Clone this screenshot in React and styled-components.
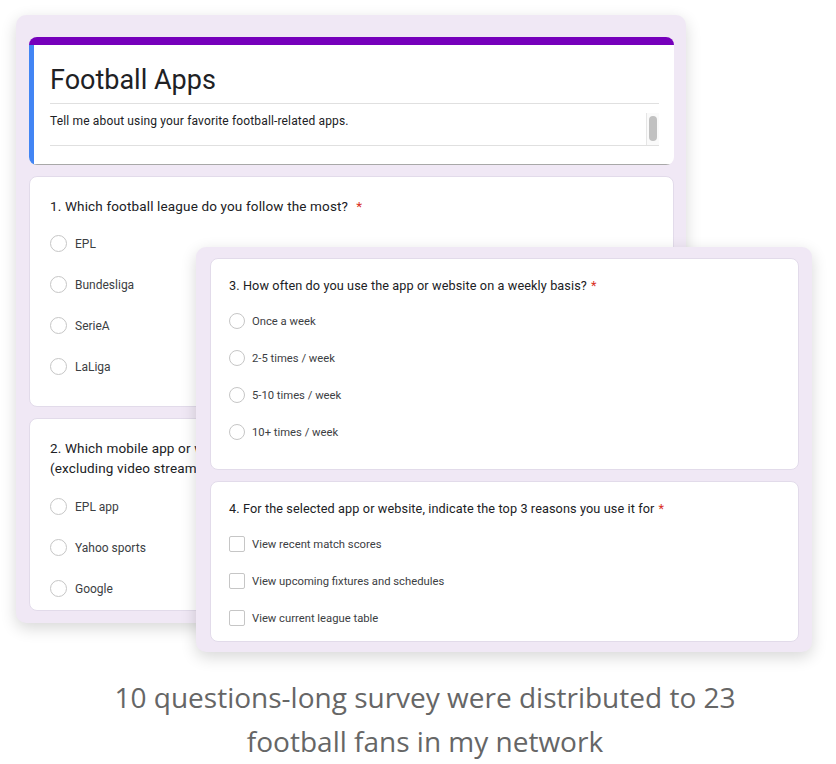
import React from "react";
import styled, { createGlobalStyle } from "styled-components";

const GlobalStyle = createGlobalStyle`
  body {
    margin: 0;
    background: #fff;
    font-family: Roboto, "Liberation Sans", sans-serif;
    color: #202124;
  }
`;

const Page = styled.div`
  width: 836px;
  height: 764px;
  overflow: hidden;
`;

const Stage = styled.div`
  position: relative;
  height: 675px;
  padding: 15px 0 0 16px;
  box-sizing: border-box;
`;

const Panel = styled.div`
  background: #f0e8f5;
  border-radius: 10px;
  box-shadow: 0 5px 16px rgba(0, 0, 0, 0.16);
  display: flex;
  flex-direction: column;
  gap: 11px;
  box-sizing: border-box;
  overflow: hidden;
`;

const BackPanel = styled(Panel)`
  width: 670px;
  height: 608px;
  padding: 22px 12px 12px 13px;
`;

const FrontPanel = styled(Panel)`
  position: absolute;
  left: 196px;
  top: 247px;
  width: 616px;
  height: 405px;
  padding: 11px 13px 10px 14px;
`;

const Card = styled.div`
  background: #fff;
  border: 1px solid #e2dbea;
  border-radius: 8px;
  padding: ${(p) => (p.$small ? "18px 18px 0" : "19px 20px 0")};
  flex: ${(p) => (p.$fill ? "1" : "none")};
  height: ${(p) => (p.$h ? `${p.$h}px` : "auto")};
  min-height: 0;
  overflow: hidden;
  box-sizing: border-box;
`;

const HeaderCard = styled.div`
  background: #fff;
  border-radius: 8px;
  border-top: 8px solid #7600bb;
  overflow: hidden;
  flex: none;
`;

const HeaderBody = styled.div`
  border-left: 5px solid #4285f4;
  border-bottom: 1px solid #a8a8a8;
  padding: 19px 15px 18px 16px;
`;

const Title = styled.h1`
  margin: 0;
  font-family: Roboto, "Liberation Sans", sans-serif;
  font-weight: 400;
  font-size: 27px;
  line-height: 32px;
  color: #202124;
  padding-bottom: 7px;
  border-bottom: 1px solid #e0e0e0;
`;

const DescBox = styled.div`
  display: flex;
  height: 41px;
  border-bottom: 1px solid #e0e0e0;
`;

const Desc = styled.p`
  flex: 1;
  margin: 0;
  padding-top: 10px;
  font-size: 12px;
  letter-spacing: 0.15px;
  line-height: 14px;
  color: #202124;
`;

const ScrollTrack = styled.div`
  width: 13px;
  margin-top: 9px;
  background: #fafafa;
  border-left: 1px solid #e6e6e6;
  display: flex;
  justify-content: center;
  padding-top: 3px;
  box-sizing: border-box;
`;

const ScrollThumb = styled.div`
  width: 8px;
  height: 25px;
  border-radius: 4px;
  background: #c1c1c1;
`;

const Question = styled.div`
  font-family: Roboto, "Liberation Sans", sans-serif;
  font-size: ${(p) => (p.$small ? "12.7px" : "13.5px")};
  letter-spacing: ${(p) => (p.$small ? "0.1px" : "0.15px")};
  line-height: ${(p) => (p.$small ? "18px" : "20px")};
  color: #202124;
`;

const Req = styled.span`
  color: #d93025;
  margin-left: ${(p) => (p.$wide ? "8px" : "4px")};
`;

const OptionList = styled.div`
  margin-top: ${(p) => (p.$small ? "7.5px" : p.$gap ? `${p.$gap}px` : "7px")};
  display: flex;
  flex-direction: column;
`;

const Option = styled.div`
  display: flex;
  align-items: center;
  height: ${(p) => (p.$small ? "37px" : "41px")};
  gap: ${(p) => (p.$small ? "7px" : "8px")};
  font-size: ${(p) => (p.$small ? "11.25px" : "12px")};
  color: #3c4043;
`;

const Radio = styled.span`
  width: ${(p) => (p.$small ? "16px" : "17px")};
  height: ${(p) => (p.$small ? "16px" : "17px")};
  border-radius: 50%;
  border: 1.5px solid #c6c6c6;
  box-sizing: border-box;
  flex: none;
`;

const Check = styled.span`
  width: 16px;
  height: 16px;
  border-radius: 2px;
  border: 1.5px solid #c6c6c6;
  box-sizing: border-box;
  flex: none;
`;

const Caption = styled.p`
  margin: 0;
  padding-left: 14px;
  text-align: center;
  font-family: "Open Sans", "Liberation Sans", sans-serif;
  font-weight: 400;
  font-size: 28px;
  line-height: 44px;
  color: #666;
`;

function Choices({ items, small, check, gap }) {
  return (
    <OptionList $small={small} $gap={gap}>
      {items.map((label) => (
        <Option key={label} $small={small}>
          {check ? <Check /> : <Radio $small={small} />}
          {label}
        </Option>
      ))}
    </OptionList>
  );
}

export default function App() {
  return (
    <Page>
      <GlobalStyle />
      <Stage>
        <BackPanel>
          <HeaderCard>
            <HeaderBody>
              <Title>Football Apps</Title>
              <DescBox>
                <Desc>Tell me about using your favorite football-related apps.</Desc>
                <ScrollTrack>
                  <ScrollThumb />
                </ScrollTrack>
              </DescBox>
            </HeaderBody>
          </HeaderCard>
          <Card $h={231}>
            <Question>
              1. Which football league do you follow the most?<Req $wide>*</Req>
            </Question>
            <Choices items={["EPL", "Bundesliga", "SerieA", "LaLiga"]} />
          </Card>
          <Card $fill>
            <Question>
              2. Which mobile app or website do you use the most for football news?
              <br />
              (excluding video streaming services)<Req>*</Req>
            </Question>
            <Choices gap={8} items={["EPL app", "Yahoo sports", "Google"]} />
          </Card>
        </BackPanel>

        <FrontPanel>
          <Card $small $h={212}>
            <Question $small>
              3. How often do you use the app or website on a weekly basis?<Req>*</Req>
            </Question>
            <Choices
              small
              items={["Once a week", "2-5 times / week", "5-10 times / week", "10+ times / week"]}
            />
          </Card>
          <Card $small $fill>
            <Question $small>
              4. For the selected app or website, indicate the top 3 reasons you use it for<Req>*</Req>
            </Question>
            <Choices
              small
              check
              items={[
                "View recent match scores",
                "View upcoming fixtures and schedules",
                "View current league table",
              ]}
            />
          </Card>
        </FrontPanel>
      </Stage>
      <Caption>
        10 questions-long survey were distributed to 23
        <br />
        football fans in my network
      </Caption>
    </Page>
  );
}
